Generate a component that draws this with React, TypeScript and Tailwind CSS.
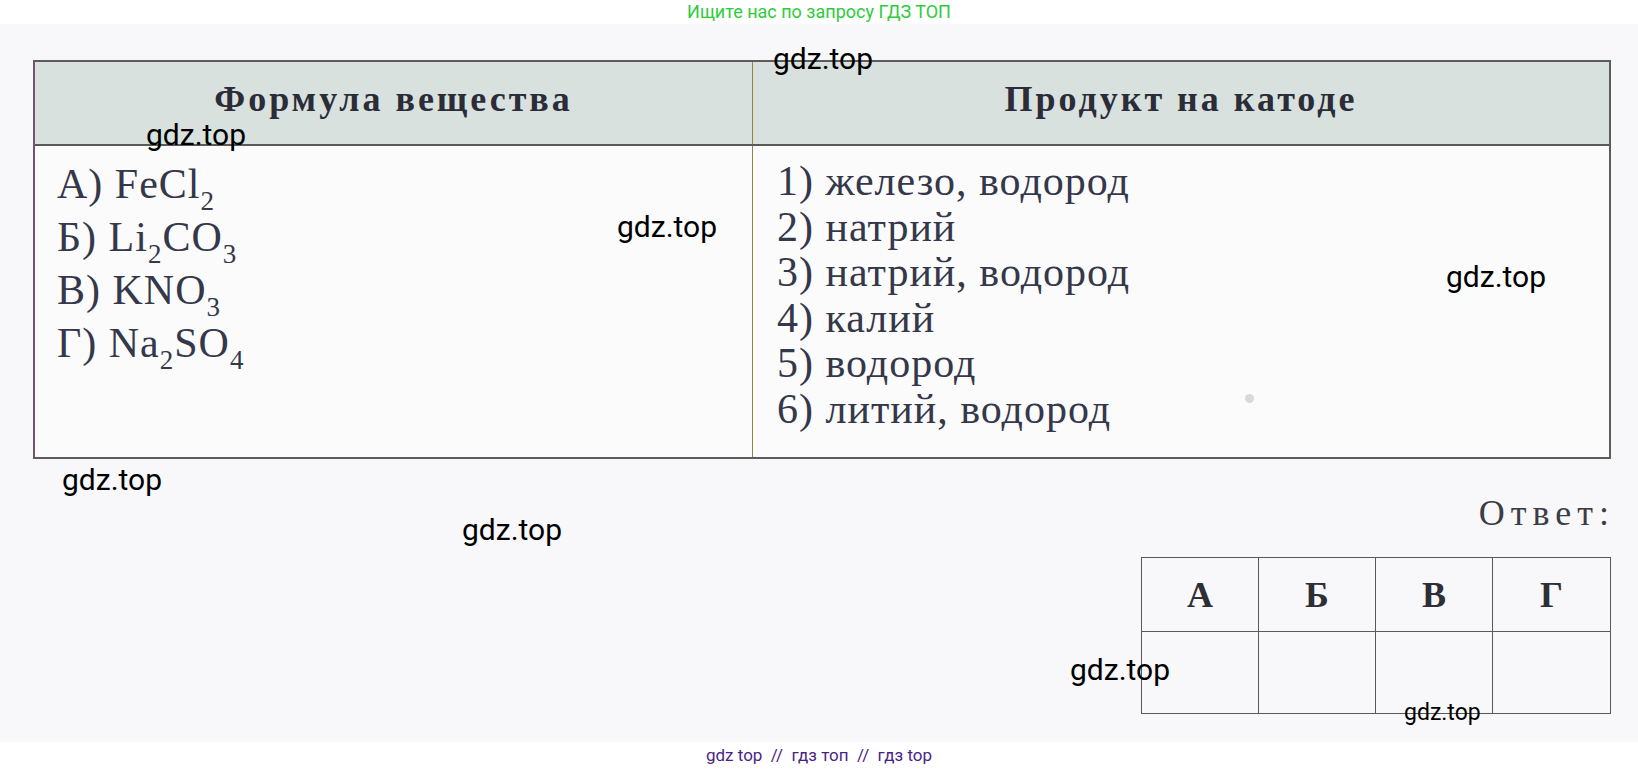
import React from 'react';

const Sub: React.FC<{ children: React.ReactNode }> = ({ children }) => (
  <span className="relative top-[12px] text-[27px] leading-none">{children}</span>
);

const formulas: { letter: string; body: React.ReactNode }[] = [
  { letter: 'А)', body: <>FeCl<Sub>2</Sub></> },
  { letter: 'Б)', body: <>Li<Sub>2</Sub>CO<Sub>3</Sub></> },
  { letter: 'В)', body: <>KNO<Sub>3</Sub></> },
  { letter: 'Г)', body: <>Na<Sub>2</Sub>SO<Sub>4</Sub></> },
];

const products = [
  '1) железо, водород',
  '2) натрий',
  '3) натрий, водород',
  '4) калий',
  '5) водород',
  '6) литий, водород',
];

const marks = [
  { left: 'left-[773px]', top: 'top-[44px]', size: 'text-[30px]' },
  { left: 'left-[146px]', top: 'top-[120px]', size: 'text-[30px]' },
  { left: 'left-[617px]', top: 'top-[212px]', size: 'text-[30px]' },
  { left: 'left-[1446px]', top: 'top-[262px]', size: 'text-[30px]' },
  { left: 'left-[62px]', top: 'top-[465px]', size: 'text-[30px]' },
  { left: 'left-[462px]', top: 'top-[515px]', size: 'text-[30px]' },
  { left: 'left-[1070px]', top: 'top-[655px]', size: 'text-[30px]' },
  { left: 'left-[1404px]', top: 'top-[701px]', size: 'text-[23px]' },
];

const App: React.FC = () => {
  return (
    <div className="relative w-[1638px] h-[770px] overflow-hidden bg-white font-['Roboto',sans-serif]">
      <div className="h-[24px] pt-[3px] text-center text-[18px] leading-none text-[#2ecc3a]">
        Ищите нас по запросу ГДЗ ТОП
      </div>

      {/* photographed page */}
      <div className="h-[718px] bg-[#f8f8fa] pt-[36px] pl-[33px] font-['Liberation_Serif',serif] text-[#35374a]">
        <div className="w-[1578px] border-2 border-[#5c5c5e] border-l-[#6e566e]">
          <div className="flex h-[84px] bg-[#d8e1de] border-b-2 border-[#5a5a5c]">
            <div className="w-[718px] shrink-0 border-r border-[#8d8648] pt-[19px] text-center text-[36px] leading-none font-bold tracking-[3px] text-[#2b2c38]">
              Формула вещества
            </div>
            <div className="flex-1 pt-[19px] text-center text-[36px] leading-none font-bold tracking-[3px] text-[#2b2c38]">
              Продукт на катоде
            </div>
          </div>
          <div className="flex h-[311px] bg-[#fbfbfc]">
            <div className="w-[718px] shrink-0 border-r border-[#8d8648] pl-[22px] pt-[12px] text-[42px] leading-[53px] tracking-[1px]">
              {formulas.map((f) => (
                <div key={f.letter}>
                  {f.letter} {f.body}
                </div>
              ))}
            </div>
            <div className="flex-1 pl-[24px] pt-[13px] text-[42px] leading-[45.6px] tracking-[1px]">
              {products.map((p) => (
                <div key={p}>{p}</div>
              ))}
            </div>
          </div>
        </div>

        <div className="w-[1578px] flex flex-col items-end">
          <div className="mt-[36px] -mr-[4px] text-[36px] leading-none tracking-[6px] text-[#3c3c44]">Ответ:</div>
          <div className="mt-[26px] grid w-[470px] grid-cols-4 border-[1.5px] border-[#59595c] text-[#2d2e36]">
            {['А', 'Б', 'В', 'Г'].map((l, i) => (
              <div
                key={l}
                className={`flex h-[74px] items-center justify-center border-b-[1.5px] border-[#59595c] text-[36px] font-bold ${i < 3 ? 'border-r-[1.5px]' : ''}`}
              >
                {l}
              </div>
            ))}
            {[0, 1, 2, 3].map((i) => (
              <div key={i} className={`h-[81px] border-[#59595c] ${i < 3 ? 'border-r-[1.5px]' : ''}`} />
            ))}
          </div>
        </div>
      </div>

      <div className="pt-[5px] text-center text-[17px] leading-none text-[#4a1f88] whitespace-pre">
        gdz top  //  гдз топ  //  гдз top
      </div>

      <div className="absolute left-[1245px] top-[394px] h-[9px] w-[9px] rounded-full bg-[#d9d9dd]" />

      {marks.map((m, i) => (
        <div key={i} className={`absolute ${m.left} ${m.top} ${m.size} leading-none text-black`}>
          gdz.top
        </div>
      ))}
    </div>
  );
};

export default App;
